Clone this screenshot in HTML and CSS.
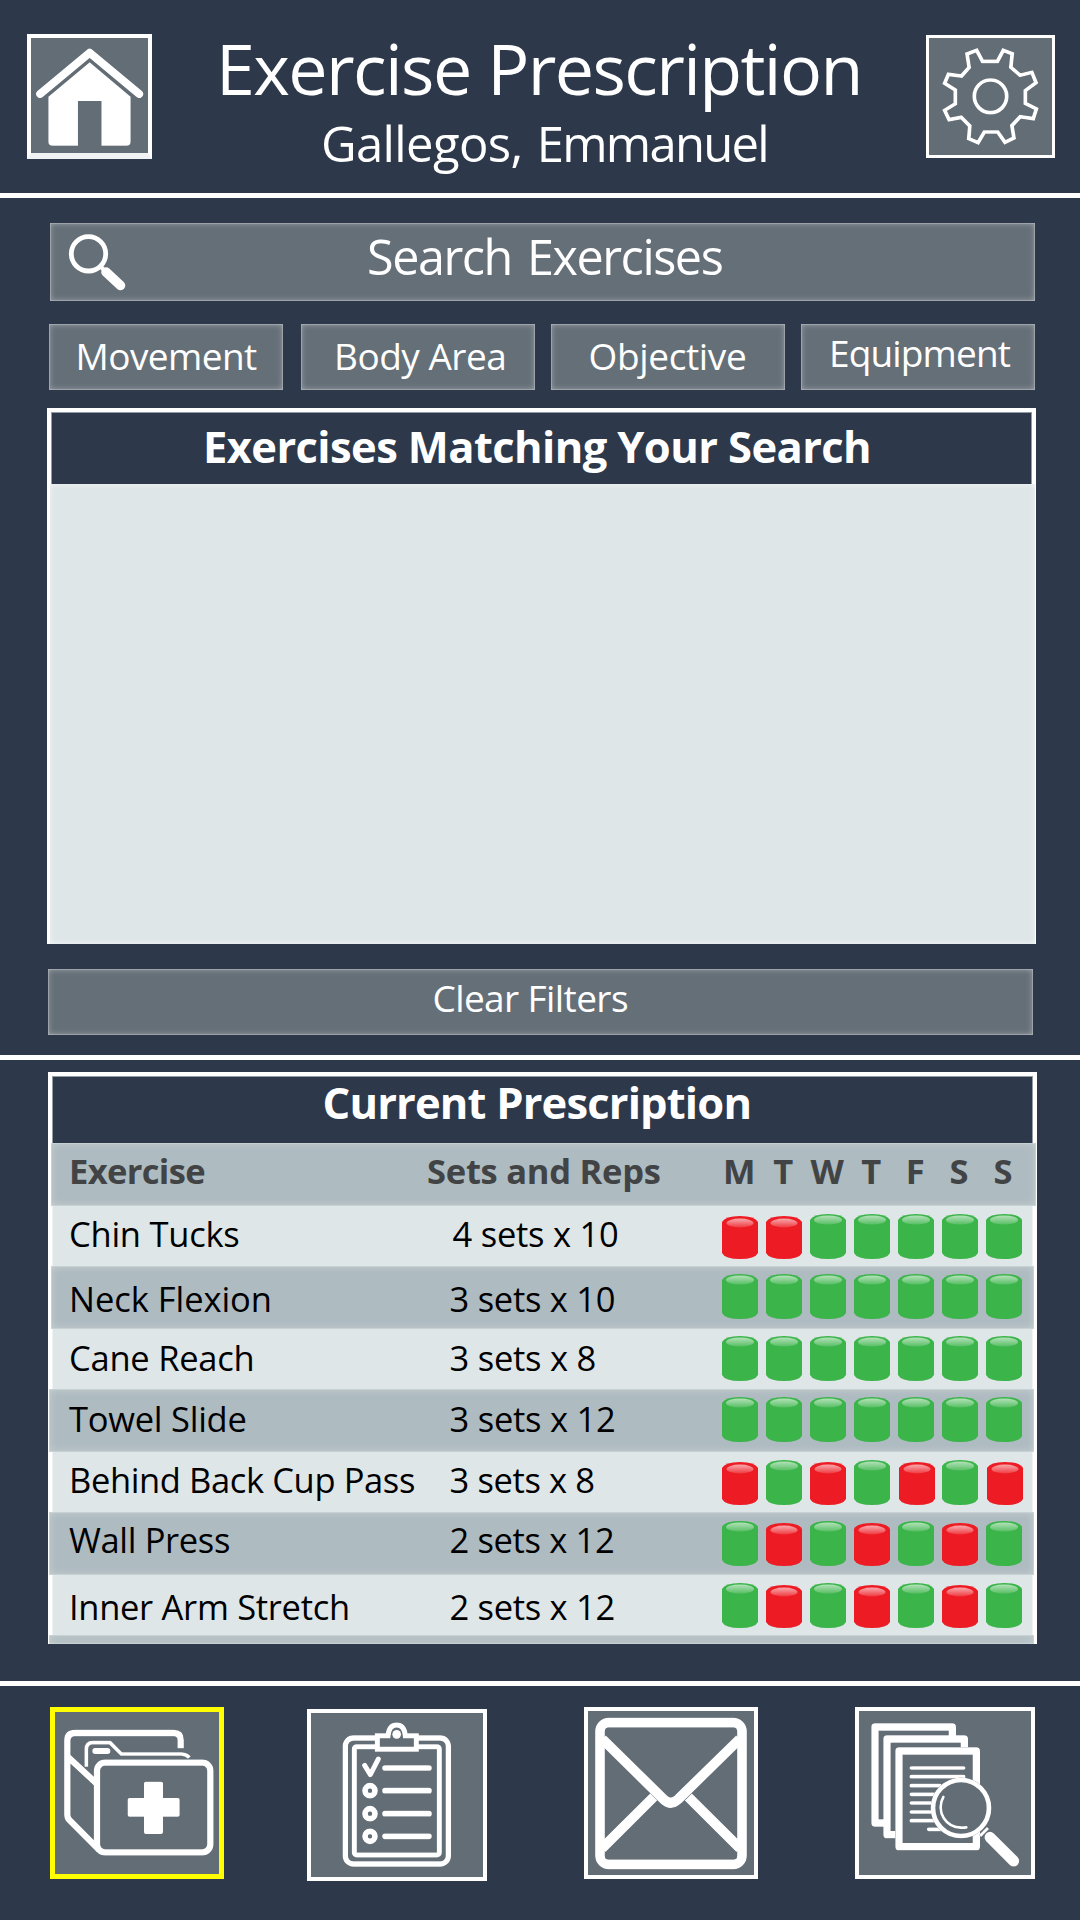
FILE: index.html
```
<!DOCTYPE html>
<html lang="en">
<head>
<meta charset="utf-8">
<title>Exercise Prescription</title>
<link rel="stylesheet" href="styles.css">
</head>
<body>
<svg class="defs" width="0" height="0" aria-hidden="true">
  <defs>
    <linearGradient id="shine" x1="0" y1="0" x2="0" y2="1">
      <stop offset="0" stop-color="#fff" stop-opacity=".62"/>
      <stop offset="1" stop-color="#fff" stop-opacity=".14"/>
    </linearGradient>
    <symbol id="done" viewBox="0 0 36 45">
      <path fill="#3bb44a" d="M0 6Q3 0 18 0Q33 0 36 6V39Q33 45 18 45Q3 45 0 39Z"/>
      <ellipse fill="url(#shine)" cx="18" cy="6" rx="14" ry="4.6"/>
    </symbol>
    <symbol id="missed" viewBox="0 0 36 45">
      <path fill="#ed1c24" d="M0 8Q3 2 18 2Q33 2 36 8V39Q33 45 18 45Q3 45 0 39Z"/>
      <ellipse fill="url(#shine)" cx="18" cy="9" rx="13.5" ry="4.4"/>
    </symbol>
  </defs>
</svg>

<header class="top">
  <a class="tile home">
    <svg viewBox="78 102 363 375" preserveAspectRatio="none">
      <path class="line" stroke-width="24" d="M116 282L260 158L404 282"/>
      <path class="solid" d="M260 187L379 290V425Q379 437 367 437H294V303H226V437H152Q140 437 140 425V290Z"/>
    </svg>
  </a>
  <div class="titles">
    <h1>Exercise Prescription</h1>
    <p>Gallegos, <span>Emmanuel</span></p>
  </div>
  <a class="tile settings">
    <svg viewBox="1121 105 374 369" preserveAspectRatio="none">
      <path class="line miter" stroke-width="11" d="M1268 151L1285 184H1328L1345 151L1371 161L1367 202L1394 226L1428 217L1440 248L1409 272V310L1441 327L1432 356L1394 350L1370 377L1376 414L1350 427L1329 396H1290L1272 428L1245 416L1248 378L1223 352L1188 359L1175 331L1206 311V270L1175 250L1186 223L1224 228L1246 202L1240 162Z"/>
      <ellipse class="line" stroke-width="11" cx="1308" cy="289" rx="47" ry="49"/>
    </svg>
  </a>
</header>

<section class="finder">
  <div class="search glow">
    <svg viewBox="0 0 60 60">
      <circle class="line" cx="21.5" cy="20.8" r="17.2" stroke-width="4.8"/>
      <path class="line" stroke-width="4" d="M34 34L39 39"/>
      <path class="line" stroke-width="9.5" d="M39 39L53.5 52.5"/>
    </svg>
    <span>Search Exercises</span>
  </div>
  <div class="filters">
    <button class="glow movement">Movement</button>
    <button class="glow area">Body Area</button>
    <button class="glow objective">Objective</button>
    <button class="glow equipment">Equipment</button>
  </div>
  <div class="results">
    <h2>Exercises Matching Your Search</h2>
    <div class="list"></div>
  </div>
  <button class="glow clear">Clear Filters</button>
</section>

<section class="current">
  <div class="plan">
    <h2>Current Prescription</h2>
    <div class="row head">
      <b>Exercise</b><b class="reps">Sets and Reps</b>
      <div class="days"><b>M</b><b>T</b><b>W</b><b>T</b><b>F</b><b>S</b><b>S</b></div>
    </div>
    <div class="row light chin">
      <span>Chin Tucks</span><span class="reps">4 sets x 10</span>
      <div class="days"><svg><use href="#missed"/></svg><svg><use href="#missed"/></svg><svg><use href="#done"/></svg><svg><use href="#done"/></svg><svg><use href="#done"/></svg><svg><use href="#done"/></svg><svg><use href="#done"/></svg></div>
    </div>
    <div class="row dark neck">
      <span>Neck Flexion</span><span class="reps">3 sets x 10</span>
      <div class="days"><svg><use href="#done"/></svg><svg><use href="#done"/></svg><svg><use href="#done"/></svg><svg><use href="#done"/></svg><svg><use href="#done"/></svg><svg><use href="#done"/></svg><svg><use href="#done"/></svg></div>
    </div>
    <div class="row light cane">
      <span>Cane Reach</span><span class="reps">3 sets x 8</span>
      <div class="days"><svg><use href="#done"/></svg><svg><use href="#done"/></svg><svg><use href="#done"/></svg><svg><use href="#done"/></svg><svg><use href="#done"/></svg><svg><use href="#done"/></svg><svg><use href="#done"/></svg></div>
    </div>
    <div class="row dark towel">
      <span>Towel Slide</span><span class="reps">3 sets x 12</span>
      <div class="days"><svg><use href="#done"/></svg><svg><use href="#done"/></svg><svg><use href="#done"/></svg><svg><use href="#done"/></svg><svg><use href="#done"/></svg><svg><use href="#done"/></svg><svg><use href="#done"/></svg></div>
    </div>
    <div class="row light cup">
      <span>Behind Back Cup Pass</span><span class="reps">3 sets x 8</span>
      <div class="days"><svg><use href="#missed"/></svg><svg><use href="#done"/></svg><svg><use href="#missed"/></svg><svg><use href="#done"/></svg><svg><use href="#missed"/></svg><svg><use href="#done"/></svg><svg><use href="#missed"/></svg></div>
    </div>
    <div class="row dark wall">
      <span>Wall Press</span><span class="reps">2 sets x 12</span>
      <div class="days"><svg><use href="#done"/></svg><svg><use href="#missed"/></svg><svg><use href="#done"/></svg><svg><use href="#missed"/></svg><svg><use href="#done"/></svg><svg><use href="#missed"/></svg><svg><use href="#done"/></svg></div>
    </div>
    <div class="row light arm">
      <span>Inner Arm Stretch</span><span class="reps">2 sets x 12</span>
      <div class="days"><svg><use href="#done"/></svg><svg><use href="#missed"/></svg><svg><use href="#done"/></svg><svg><use href="#missed"/></svg><svg><use href="#done"/></svg><svg><use href="#missed"/></svg><svg><use href="#done"/></svg></div>
    </div>
    <div class="row dark next"></div>
  </div>
</section>

<nav class="tabs">
  <a class="tile folder active">
    <svg viewBox="60 51 522 516">
      <path class="line butt" stroke-width="19" d="M452 175V150Q452 129 431 129H135Q112 129 112 152V374Q112 384 119 391L207 479M112 199L200 281"/>
      <path class="line butt" stroke-width="11" d="M169 230V178Q169 158 188 158H240L274 192H455Q470 193 478 203"/>
      <rect class="solid" x="187" y="174" width="54" height="18" rx="8"/>
      <rect class="line" stroke-width="19" x="201" y="218" width="340" height="269" rx="24"/>
      <path class="solid" d="M347 275H394Q399 275 399 280V324H444Q449 324 449 329V375Q449 380 444 380H399V427Q399 432 394 432H347Q342 432 342 427V380H298Q293 380 293 375V329Q293 324 298 324H342V280Q342 275 347 275Z"/>
    </svg>
  </a>
  <a class="tile checklist">
    <svg viewBox="51 57 540 516">
      <rect class="line" stroke-width="16" x="166" y="144" width="309" height="378" rx="24"/>
      <rect class="line" stroke-width="15" x="193" y="170" width="255" height="325" rx="7"/>
      <path class="line filled miter" stroke-width="15" d="M262 178V137H294Q297 105 320 105Q343 105 346 137H379V178Z"/>
      <circle class="solid" cx="320" cy="133" r="13"/>
      <path class="line" stroke-width="15" d="M224 226L241 254L265 207"/>
      <path class="line" stroke-width="17" d="M285 234H417M285 302H417M285 371H417M285 439H417"/>
      <g class="line" stroke-width="17"><circle cx="240" cy="302" r="15"/><circle cx="240" cy="371" r="15"/><circle cx="240" cy="439" r="15"/></g>
    </svg>
  </a>
  <a class="tile mail">
    <svg viewBox="42 51 522 516">
      <rect class="line" stroke-width="29" x="90" y="98" width="426" height="425" rx="26"/>
      <path class="line butt" stroke-width="30" d="M97 147L281 328Q302 348 324 328L509 147M96 475L251 321M510 475L355 321"/>
    </svg>
  </a>
  <a class="tile records">
    <svg viewBox="45 51 540 516">
      <path class="line butt" stroke-width="22" d="M337 138V111H105V399H131M373 174V147H141V434H167"/>
      <rect class="line" stroke-width="22" x="177" y="183" width="232" height="287"/>
      <path class="line" stroke-width="11" d="M214 234H371M214 260H371M214 287H300M214 313H290M214 339H280M214 366H280M214 392H290M266 418H305"/>
      <circle class="line filled" stroke-width="14" cx="363" cy="354" r="84"/>
      <path class="line" stroke-width="8" d="M310 321C287 361 314 421 379 412"/>
      <path class="line butt" stroke-width="9" d="M420 438L444 414"/>
      <path class="line" stroke-width="33" d="M450 442L521 513"/>
    </svg>
  </a>
</nav>
</body>
</html>
```
FILE: styles.css
```
* { box-sizing: border-box; }

body {
  margin: 0;
  width: 1080px;
  height: 1920px;
  overflow: hidden;
  background: #2d394a;
  color: #fff;
  font-family: "Open Sans", "Noto Sans", sans-serif;
}

h1, h2, p { margin: 0; font-weight: 400; white-space: nowrap; }
svg { display: block; }
.defs { position: absolute; }

button {
  border: 0;
  margin: 0;
  color: inherit;
  font: inherit;
  text-align: left;
  white-space: nowrap;
}

/* icon strokes */
.line { fill: none; stroke: #fff; stroke-linecap: round; stroke-linejoin: round; }
.miter { stroke-linejoin: miter; }
.butt { stroke-linecap: butt; }
.solid { fill: #fff; }
.filled { fill: #636d75; }
.home .line, .home .solid, .settings .line, .records .line { filter: drop-shadow(0 0 1.5px rgba(38, 52, 68, .9)); }
.folder svg, .checklist svg, .mail svg { filter: drop-shadow(0 0 .6px rgba(38, 52, 68, .9)); }

.tile {
  display: block;
  flex: none;
  background: #636d75;
  border: 4px solid #fff;
}
.tile svg { width: 100%; height: 100%; overflow: visible; }

.glow {
  background: #656f78;
  box-shadow: inset 0 0 0 1px rgba(255, 255, 255, .22), inset 0 0 6px rgba(255, 255, 255, .42);
}

/* header */
.top {
  display: flex;
  align-items: flex-start;
  height: 198px;
  padding-left: 27px;
  border-bottom: 5px solid #fff;
}
.home { width: 125px; height: 125px; margin-top: 34px; border-bottom-width: 6px; border-bottom-color: #f0f2f3; }
.home svg { margin: -4px; width: 125px; height: 125px; }
.titles { width: 710px; padding: 28px 0 0 64px; }
.titles h1 { font-size: 70px; line-height: 80px; letter-spacing: -1.59px; }
.titles p { margin: 5px 0 0 105px; font-size: 49px; line-height: 60px; letter-spacing: -.62px; }
.titles span { letter-spacing: -1.75px; margin-left: 2px; }
.settings { width: 129px; height: 123px; margin: 35px 0 0 64px; border-width: 3px; }
.settings svg { margin: -3px; width: 129px; height: 123px; }

/* search and filters */
.finder {
  display: flex;
  flex-direction: column;
  height: 862px;
  padding: 25px 0 0 47px;
  border-bottom: 5px solid #fff;
}
.search { display: flex; flex: none; width: 985px; height: 78px; margin-left: 3px; }
.search svg { width: 60px; height: 60px; margin: 10px 0 0 17px; }
.search span { margin-left: 240px; font-size: 48.5px; line-height: 66px; letter-spacing: -1.45px; word-spacing: 4px; }
.filters {
  display: grid;
  grid-template-columns: 236px 234px 234px 234px;
  gap: 16px;
  margin: 23px 0 0 2px;
}
.filters button { width: 234px; height: 66px; padding: 0; font-size: 37px; display: flex; }
.filters .movement { padding-left: 26.5px; line-height: 64px; letter-spacing: -.57px; }
.filters .area { padding-left: 33px; line-height: 63px; letter-spacing: -.5px; }
.filters .objective { padding-left: 37.5px; line-height: 63px; letter-spacing: -.35px; }
.filters .equipment { padding-left: 28px; line-height: 58px; letter-spacing: -.86px; }

.results { width: 989px; height: 536px; margin-top: 18px; background: #fff; padding: 4px 1px 0 3px; }
.results h2 {
  height: 72px;
  margin: 0 3px 0 1px;
  padding-left: 152px;
  background: #2d394a;
  box-shadow: inset 0 1px 0 #949ca3, inset 1px 0 0 #949ca3, inset -1px 0 0 #949ca3;
  font-size: 43.5px;
  font-weight: 700;
  line-height: 70px;
  letter-spacing: -.6px;
}
.results .list { height: 460px; background: #dfe6e8; box-shadow: inset 0 0 6px rgba(255, 255, 255, .6); }

.clear {
  display: flex;
  width: 985px;
  height: 66px;
  margin: 25px 0 0 1px;
  padding: 0 0 0 384.5px;
  font-size: 37px;
  line-height: 58px;
  letter-spacing: -.6px;
}

/* prescription table */
.current { height: 626px; padding: 12px 0 0 48px; border-bottom: 5px solid #fff; }
.plan { width: 989px; height: 572px; background: #fff; padding-top: 4px; }
.plan h2 {
  height: 67px;
  margin: 0 4px;
  padding-left: 270.5px;
  background: #2d394a;
  box-shadow: inset 0 1px 0 #949ca3, inset 1px 0 0 #949ca3, inset -1px 0 0 #949ca3;
  font-size: 43.5px;
  font-weight: 700;
  line-height: 54px;
  letter-spacing: -.83px;
}
.row {
  --l: 3px;
  --r: 3px;
  display: grid;
  grid-template-columns: 380.5px 272px 300px;
  height: 63px;
  margin: 0 var(--r) 0 var(--l);
  padding-left: calc(21px - var(--l));
  background: #aebbc0;
  box-shadow: inset 0 0 0 1px rgba(255, 255, 255, .2), inset 0 0 8px rgba(223, 230, 226, .55);
  color: #000;
  font-size: 34.5px;
  letter-spacing: -.25px;
  white-space: nowrap;
}
.row.light { --l: 4px; --r: 4px; height: 60px; background: #dfe6e8; box-shadow: inset 1px 0 0 #eef2f3, inset -1px 0 0 #eef2f3; }
.row.head { --r: 1px; color: #414345; line-height: 56.5px; }
.head b:first-child { letter-spacing: -.65px; }
.head .reps { margin-left: -22.5px; }
.days { display: grid; grid-template-columns: repeat(7, 36px); gap: 8px; height: 45px; padding-top: 8px; }
.days svg { width: 36px; height: 45px; }
.head .days { padding: 0; }
.days b { display: flex; justify-content: center; margin-left: -1px; }
.chin { line-height: 56px; }
.chin .reps { padding-left: 3px; }
.neck { line-height: 66px; }
.neck span { letter-spacing: -.05px; }
.neck .reps { letter-spacing: -.27px; }
.cane { line-height: 58px; }
.cane .days { padding-top: 7px; }
.towel { --l: 1px; line-height: 60px; }
.cup { line-height: 56.5px; letter-spacing: -.38px; }
.cup .days svg:nth-child(5), .cup .days svg:nth-child(7) { margin-left: 1px; }
.wall { --l: 1px; line-height: 56.5px; letter-spacing: -.35px; }
.arm { line-height: 64.5px; letter-spacing: -.3px; }
.wall .days { padding-top: 9px; }
.row.next { --l: 1px; height: 9px; }

/* bottom tabs */
.tabs { display: flex; align-items: flex-start; padding: 21px 0 0 50px; }
.tabs svg { margin: -4px; }
.folder { width: 174px; height: 172px; }
.folder svg, .mail svg { width: 174px; height: 172px; }
.folder.active { border: 5px solid #ff0; }
.folder.active svg { margin: -5px; }
.checklist { width: 180px; height: 172px; margin: 2px 0 0 83px; }
.checklist svg, .records svg { width: 180px; height: 172px; }
.mail { width: 174px; height: 172px; margin-left: 97px; }
.records { width: 180px; height: 172px; margin-left: 97px; }
```
